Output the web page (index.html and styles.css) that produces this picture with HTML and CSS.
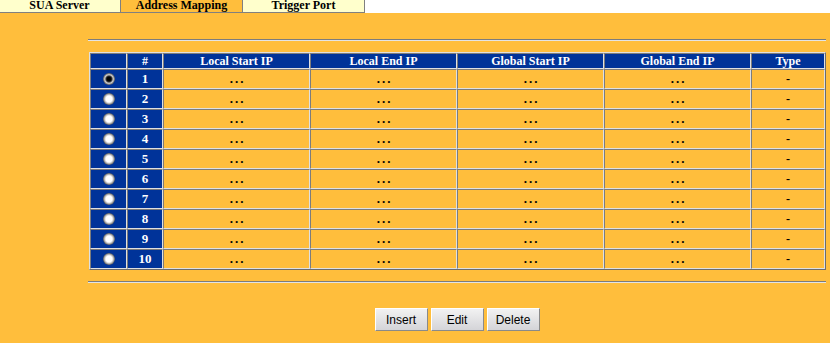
FILE: index.html
```html
<!DOCTYPE html>
<html lang="en">
<head>
    <meta charset="UTF-8">
    <title>Address Mapping</title>
    <link rel="stylesheet" href="styles.css">
</head>
<body>
    <div class="tab-bar">
        <a class="tab">SUA Server</a>
        <a class="tab active">Address Mapping</a>
        <a class="tab">Trigger Port</a>
    </div>

    <div class="content">
        <hr class="rule">
        <table class="map-table">
            <thead>
                <tr>
                    <th class="col-sel"></th>
                    <th class="col-num">#</th>
                    <th class="col-ip">Local Start IP</th>
                    <th class="col-ip">Local End IP</th>
                    <th class="col-ip">Global Start IP</th>
                    <th class="col-ip">Global End IP</th>
                    <th class="col-type">Type</th>
                </tr>
            </thead>
            <tbody id="rows"></tbody>
        </table>
        <hr class="rule">
        <div class="actions">
            <button>Insert</button>
            <button>Edit</button>
            <button>Delete</button>
        </div>
    </div>

    <script>
        var rows = document.getElementById('rows');
        var dots = '<td><span class="dots">...</span></td>';
        for (var i = 1; i <= 10; i++) {
            var tr = document.createElement('tr');
            tr.innerHTML =
                '<td class="sel"><input type="radio" name="pick"' + (i === 1 ? ' checked' : '') + '></td>' +
                '<td class="num">' + i + '</td>' +
                dots + dots + dots + dots +
                '<td class="type">-</td>';
            rows.appendChild(tr);
        }
    </script>
</body>
</html>
```

FILE: styles.css
```css
body {
    margin: 0;
    background-color: #ffbe3c;
    font-family: 'Liberation Serif', 'Times New Roman', serif;
}
.tab-bar {
    display: flex;
    height: 13px;
    margin-left: -1px;
    background-color: #ffffff;
}
.tab {
    box-sizing: border-box;
    width: 122px;
    height: 13px;
    padding-bottom: 2px;
    background-color: #ffffcc;
    border-right: 1px solid #808080;
    border-bottom: 1px solid #808080;
    color: #000000;
    font-size: 12px;
    font-weight: bold;
    line-height: 10px;
    text-align: center;
}
.tab.active {
    background-color: #ffbe3c;
}
.content {
    margin: 26px 4px 0 88px;
}
.rule {
    height: 0;
    margin: 0;
    border: 0;
    border-top: 1px solid #7c7c7c;
    border-bottom: 1px solid #e4e4e4;
}
.map-table {
    width: 737px;
    margin: 11px 0 11px 1px;
    table-layout: fixed;
    border-collapse: separate;
    border-spacing: 0;
    border: 1px solid;
    border-color: #e0e0e0 #6c6c6c #6c6c6c #e0e0e0;
}
.map-table th,
.map-table td {
    box-sizing: border-box;
    padding: 0;
    border: 1px solid;
    border-color: #7c7c7c #e0e0e0 #e0e0e0 #7c7c7c;
    text-align: center;
    font-size: 12px;
    font-weight: bold;
}
.map-table th {
    height: 16px;
    line-height: 14px;
    background-color: #003399;
    color: #ffffff;
}
.map-table td {
    height: 20px;
    line-height: 18px;
    color: #000000;
}
.col-sel { width: 37px; }
.col-num { width: 36px; }
.col-ip { width: 147px; }
.map-table td.sel,
.map-table td.num {
    background-color: #003399;
    color: #ffffff;
}
.map-table td.num {
    font-size: 13px;
}
.dots {
    padding-left: 2px;
    font-size: 13px;
    letter-spacing: 2px;
}
.sel input {
    -webkit-appearance: none;
    appearance: none;
    display: block;
    width: 12px;
    height: 12px;
    margin: 0 auto;
    border-radius: 50%;
    background: radial-gradient(circle, #ffffff 0 3px, #d8d8d8 4px, #7a7a7a 5.5px, #5a5a5a 6px);
}
.sel input:checked {
    background: radial-gradient(circle, #000000 0 2px, #3a3a3a 3px, #d0d0d0 4.2px, #7a7a7a 5.5px, #5a5a5a 6px);
}
.actions {
    display: flex;
    justify-content: center;
    gap: 3px;
    margin-top: 25px;
}
.actions button {
    width: 53px;
    height: 23px;
    padding: 0;
    font-family: 'Liberation Sans', Arial, sans-serif;
    font-size: 12px;
    color: #000000;
    background: linear-gradient(#f2f2f2, #d4d4d8);
    border: 1px solid;
    border-color: #ffffff #8a8a8a #8a8a8a #ffffff;
}
```
